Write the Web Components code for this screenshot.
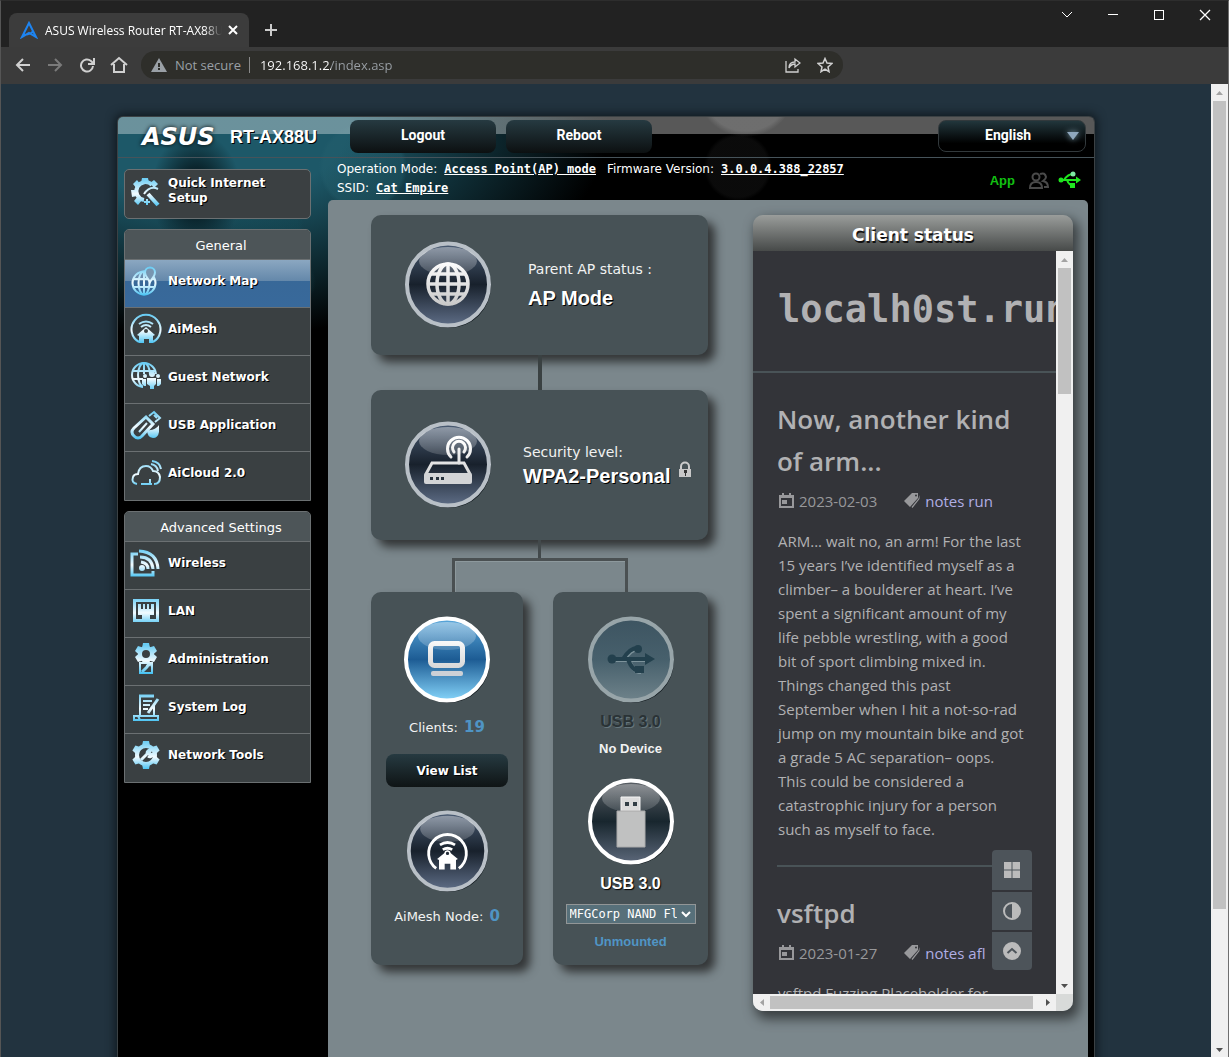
<!DOCTYPE html>
<html lang="en">
<head>
<meta charset="utf-8">
<title>ASUS Wireless Router RT-AX88U</title>
<style>
html, body { margin: 0; height: 100%; overflow: hidden; background: #3b3b3b; }
body { font-family: "DejaVu Sans", sans-serif; font-size: 12px; color: #fff; }
</style>
</head>
<body>
<browser-window>
  <tab-strip slot="tabs">ASUS Wireless Router RT-AX88U</tab-strip>
  <nav-toolbar slot="toolbar"></nav-toolbar>
  <router-page></router-page>
</browser-window>

<script>
const define = (name, css, html) => {
  const template = document.createElement('template');
  template.innerHTML = '<style>*{box-sizing:border-box}' + css + '</style>' + html;
  customElements.define(name, class extends HTMLElement {
    constructor() {
      super();
      this.attachShadow({ mode: 'open' }).append(template.content.cloneNode(true));
    }
  });
};

/* ---------- icons ---------- */
const G = 'stroke="url(#g)" fill="none"';
const F = 'fill="url(#g)"';
const gear = (cx, cy, r, t) => {
  let s = `<circle cx="${cx}" cy="${cy}" r="${r}" fill="none" stroke="url(#g)" stroke-width="${t}"/>`;
  for (let a = 0; a < 360; a += 60) {
    const rad = a * Math.PI / 180, c = Math.cos(rad), n = Math.sin(rad);
    const p = (x, y) => `${(cx + x * c - y * n).toFixed(1)} ${(cy + x * n + y * c).toFixed(1)}`;
    s += `<path ${F} d="M${p(-t, -r)}L${p(1 - t, -r - t - 1)}L${p(t - 1, -r - t - 1)}L${p(t, -r)}z"/>`;
  }
  return s;
};
const icons = {
  wizard: `<path ${G} stroke-width="4" d="M22 9a9 9 0 1 0-8 15"/><path ${F} d="M12 2h6l1 5h-8zM3 8l4-4 4 5-4 4zM1 14h6v6l-5 1zM4 25l4-5 4 4-4 5zM20 7l4-3 4 4-4 4z"/><path ${G} stroke-width="4" d="m18 18 10 11"/><path ${G} d="M14 18c4-6 8-8 14-5M17 23v6M14 26h6"/>`,
  map: `<g ${G}><circle cx="14" cy="18" r="11.500"/><ellipse cx="14" cy="18" rx="5.500" ry="11.500"/><path d="M14 6v24M3 14h22M3 22h22"/></g><path fill="#7896b1" stroke="url(#g)" d="M20 17c-3-5-5-6-5-9.500a5 5 0 0 1 10 0C25 11 23 12 20 17z"/>`,
  mesh: `<g ${G}><path d="M9 29A14.500 14.500 0 1 1 23 29"/><path d="M9 11q7-5 14 0M11 14q5-4 10 0"/></g><path ${F} d="M7 22 16 14l9 8-2 1v7h-4v-4h-5v4H9v-7z"/><circle cx="16" cy="18" r="2" fill="#3a4042"/>`,
  guest: `<g ${G}><circle cx="14" cy="14" r="12"/><ellipse cx="14" cy="14" rx="6" ry="12"/><path d="M14 2v24M2 10h24M2 18h24"/></g><path fill="#3a4042" d="M13 13h18v17H13z"/><g ${F}><circle cx="22" cy="13" r="3"/><circle cx="15" cy="15" r="2"/><circle cx="28" cy="15" r="2"/><path d="M17 17h9v6l-2 2v3h-4v-3l-3-2zM12 18h4v7h-2l-2-2zM27 18h4v5l-2 2h-2z"/></g>`,
  usb: `<g ${G}><path stroke-width="3" d="m4 19 12-11 7 7-11 12q-4 4-8 0t0-8z"/><path d="m9 23 8-9M19 7l5-4 6 6-5 4M24 6l3 3"/></g><path ${F} d="M17 21q8 1 12-5v7q-1 6-6 6-6-1-6-8z"/>`,
  cloud: `<g ${G}><path d="M7 27q-6-1-4-7 1-3 5-3 1-8 8-8 5 0 7 5 6 0 7 6 0 7-6 7M11 27h11M20 22v5M21 7q6 1 7 7M22 4q8 1 9 8"/></g>`,
  wifi: `<g ${G}><path stroke-width="3" d="M8 7H2v21h21v-4"/><path stroke-width="3" d="M9 4q18 1 19 18M10 10q12 0 13 12M11 15q7 1 7 7"/></g><circle cx="12" cy="21" r="3" ${F}/>`,
  lan: `<path ${G} stroke-width="3" d="M4.500 5.500h23v20h-23z"/><path ${F} d="M8 9h3v5h2V9h2v5h2V9h2v5h2V9h3v11h-4v4h-8v-4H8z"/>`,
  admin: gear(16, 11, 6, 4) + `<path fill="#3a4042" d="M9 19h14v12H9z"/><path ${G} d="M10 20h12v10H10z"/><path ${G} stroke-width="3" d="m12 29 5-5q1-3 4-2"/>`,
  log: `<g ${G}><path stroke-width="3" d="M9 5h15"/><path d="M10 5v20h14V14M13 10h9M13 14h7M13 18h5M4 25h24v4H4zM8 25l2 4"/><path stroke-width="3" d="m28 8-10 14"/></g>`,
  tools: gear(16, 16, 9, 4) + `<path ${G} stroke-width="3" d="m11 21 6-6q0-4 4-4l-2 3 1 2 3-1q-2 4-5 2"/>`
};
customElements.define('menu-icon', class extends HTMLElement {
  connectedCallback() {
    this.attachShadow({ mode: 'open' }).innerHTML = `<style>:host{display:block;width:32px;height:32px;flex:none}svg{display:block}</style>
    <svg width="32" height="32" viewBox="0 0 32 32" stroke-width="2" aria-hidden="true"><defs><linearGradient id="g" gradientUnits="userSpaceOnUse" x1="0" y1="2" x2="0" y2="31"><stop offset="0" stop-color="#68ccf4"/><stop offset=".55" stop-color="#f2fbff"/><stop offset="1" stop-color="#3fc0f2"/></linearGradient></defs>${icons[this.getAttribute('name')]}</svg>`;
  }
});

/* ---------- round badges ---------- */
const art = {
  globe: `<g fill="none" stroke="url(#w)" stroke-width="3.500"><circle cx="44" cy="43" r="20"/><ellipse cx="44" cy="43" rx="11" ry="20"/><path d="M44 22v42M24 43h40M27 33h34M27 53h34"/></g>`,
  router: `<g fill="none" stroke="url(#w)" stroke-width="3" stroke-linecap="round"><path d="M55 42V28M50 31a6.500 6.500 0 1 1 10 0M47 36a11.500 11.500 0 1 1 16 0"/><path d="M22 53l6-11h32l6 11"/></g><rect x="20" y="52" width="48" height="11" rx="2" fill="#d3d4d6"/><path fill="#26313c" d="M26 56h3v3h-3zM32 56h3v3h-3zM37 56h3v3h-3z"/>`,
  client: `<rect x="27.500" y="27.500" width="32" height="22" rx="4" fill="none" stroke="url(#w)" stroke-width="5"/><rect x="28" y="55" width="32" height="5" rx="2" fill="#ccd0d6"/>`,
  node: `<g fill="none" stroke="#fff" stroke-width="3"><path d="M32 62a20 20 0 1 1 24 0"/><path d="M36 37q8-5 16 0M39 42q5-3 10 0"/></g><path fill="#fff" d="M33 52l11-9 11 9-2 1v10h-6v-6h-6v6h-6V53z"/><circle cx="44" cy="46" r="2.500" fill="#222c38" stroke="#fff" stroke-width="1.500"/>`,
  usb: `<g fill="none" stroke="#7d939b" stroke-width="4"><path d="M27 44h34M37 44q7-11 14-11M42 44q4 12 12 12"/></g><g fill="none" stroke="#23404d" stroke-width="4"><path d="M26 43h34M36 43q7-11 14-11M41 43q4 12 12 12"/></g><g fill="#23404d"><circle cx="25" cy="43" r="4.500"/><circle cx="51" cy="33" r="4"/><path d="m58 37 10 6-10 6zM48 50h9v7h-9z"/></g>`,
  stick: `<path fill="#dcdcdc" stroke="#f4f4f4" d="M34 19h19v14H34z"/><path fill="#c0c1c1" stroke="#aaa" d="M30 33h28v36H30z"/><path fill="#333f46" d="M38 24h4v4h-4zM46 24h4v4h-4z"/>`
};
const tone = {
  dark: ['#4b5d75', '#18212c', '#5e6d86', '#b9c0c7', .3],
  blue: ['#5ba9dc', '#1d5c94', '#85d4fa', '#ffffff', .3],
  dull: ['#3d5461', '#47606c', '#6e828a', '#98a5a9', 0],
  steel: ['#5c6167', '#18262e', '#5b6779', '#ffffff', .25]
};
customElements.define('status-badge', class extends HTMLElement {
  connectedCallback() {
    const t = tone[this.getAttribute('tone')];
    this.attachShadow({ mode: 'open' }).innerHTML = `<style>:host{display:block;width:88px;height:88px;flex:none}svg{display:block;width:100%;height:100%}</style>
    <svg viewBox="0 0 88 88" aria-hidden="true"><defs>
    <linearGradient id="b" x1="0" y1="0" x2="0" y2="1"><stop offset="0" stop-color="${t[0]}"/><stop offset=".5" stop-color="${t[1]}"/><stop offset="1" stop-color="${t[2]}"/></linearGradient>
    <linearGradient id="h" x1="0" y1="0" x2="0" y2="1"><stop offset="0" stop-color="#fff" stop-opacity="${t[4] * 1.3}"/><stop offset="1" stop-color="#fff" stop-opacity="${t[4] / 2}"/></linearGradient>
    <linearGradient id="w" gradientUnits="userSpaceOnUse" x1="0" y1="20" x2="0" y2="66"><stop offset="0" stop-color="#fff"/><stop offset="1" stop-color="#c6c6c6"/></linearGradient></defs>
    <circle cx="45" cy="45" r="42" fill="#10181d"/>
    <circle cx="44" cy="43.500" r="41" fill="url(#b)" stroke="${t[3]}" stroke-width="4"/>
    <ellipse cx="44" cy="20" rx="29" ry="14" fill="url(#h)"/>${art[this.getAttribute('name')]}</svg>`;
  }
});

/* ---------- browser chrome ---------- */
define('browser-window', `
:host{display:flex;flex-direction:column;height:100vh;border:1px solid #6f6f6f;border-top-color:#2d2d2d;border-left-color:#555;background:#22333f}
.view{flex:1;min-height:0;display:flex}
.page{flex:1;min-width:0;overflow:hidden}`,
`<slot name="tabs"></slot><slot name="toolbar"></slot>
<div class="view"><div class="page"><slot></slot></div><scroll-bar style="--thumb:808px"></scroll-bar></div>`);

define('tab-strip', `
:host{display:flex;height:46px;background:#222;font-family:"Open Sans",sans-serif;color:#fff}
.tab{margin:12px 0 0 8px;width:240px;height:34px;background:#3c3c3c;border-radius:8px 8px 0 0;display:flex;align-items:center;padding:0 7px 0 11px}
.title{flex:1;margin:0 2px 0 7px;font-size:12px;overflow:hidden;white-space:nowrap;-webkit-mask-image:linear-gradient(90deg,#000 90%,transparent)}
button{border:0;background:none;padding:0;display:flex;align-items:center;justify-content:center;color:#fff}
.close{width:18px;height:18px}
.add{width:28px;height:28px;margin:15px 0 0 8px;color:#ccc}
.win{margin-left:auto;display:flex}
.win button{width:46px;height:28px}
path,rect{fill:none;stroke:currentColor}`,
`<div class="tab"><svg width="18" height="18" viewBox="0 0 18 18"><path style="stroke:#1e84f0;stroke-width:2" d="M9 2 2 16l7-4 7 4L9 2zM4 14q8-1 9-4"/></svg><div class="title"><slot></slot></div>
<button class="close" aria-label="Close tab"><svg width="10" height="10"><path stroke-width="2" d="m1 1 8 8m0-8-8 8"/></svg></button></div>
<button class="add" aria-label="New tab"><svg width="14" height="14"><path stroke-width="2" d="M7 1v12M1 7h12"/></svg></button>
<div class="win"><button aria-label="Search tabs"><svg width="12" height="8"><path d="m1 1 5 5 5-5"/></svg></button>
<button aria-label="Minimize"><svg width="10" height="2"><path d="M0 .5h10"/></svg></button>
<button aria-label="Maximize"><svg width="12" height="12"><rect x="1.500" y="1.500" width="9" height="9"/></svg></button>
<button aria-label="Close"><svg width="12" height="12"><path stroke-width="1.300" d="m1 1 10 10M11 1 1 11"/></svg></button></div>`);

define('nav-toolbar', `
:host{display:flex;align-items:center;height:37px;padding:0 6px 2px;box-sizing:border-box;background:#3b3b3b;font-family:"Open Sans",sans-serif;font-size:13px}
button{border:0;background:none;padding:0;width:32px;height:32px;display:flex;align-items:center;justify-content:center;color:#d0d0d0;flex:none}
svg{display:block;flex:none}
path{fill:none;stroke:currentColor;stroke-width:2}
.dim{color:#7a7a7a}
.box{display:flex;align-items:center;margin-left:6px;width:702px;height:28px;border-radius:14px;background:#2e2e2a;padding:0 2px 0 10px;color:#9aa0a6}
.sec{margin-left:8px;padding-right:8px;border-right:1px solid #8a8a8a;line-height:16px;white-space:nowrap}
input{flex:1;min-width:0;border:0;outline:0;margin-left:10px;padding:0;height:20px;font:inherit;color:transparent;background:linear-gradient(90deg,#fff 71px,#9aa0a6 71px);-webkit-background-clip:text;background-clip:text}`,
`<button aria-label="Back"><svg width="16" height="16"><path d="M15 8H2M8 2 2 8l6 6"/></svg></button>
<button class="dim" aria-label="Forward"><svg width="16" height="16"><path d="M1 8h13M8 2l6 6-6 6"/></svg></button>
<button aria-label="Reload"><svg width="16" height="16"><path d="M14 9a6 6 0 1 1-2-5l2 2M15 1v6H9"/></svg></button>
<button aria-label="Home"><svg width="18" height="18"><path d="M1 9l8-7 8 7M4 8v8h10V8"/></svg></button>
<div class="box"><svg width="16" height="14"><path style="fill:#9aa0a6;stroke:none" d="M8 0l8 14H0z"/><path style="stroke:#2e2e2a" d="M8 5v4M8 10v2"/></svg><span class="sec">Not secure</span>
<input aria-label="Address" value="192.168.1.2/index.asp">
<button aria-label="Share"><svg width="16" height="16"><path style="stroke-width:1.300" d="M1 4v11h12v-3M4 11q0-6 6-6V2l5 4-5 4V7q-4 0-6 4"/></svg></button>
<button aria-label="Bookmark"><svg width="16" height="16"><path style="stroke-width:1.500" d="m8 1.500 2 4.500 5 .5-4 3.500 1 4.700-4-2.500-4 2.500 1-4.700L1 6.500 6 6z"/></svg></button></div>`);

define('scroll-bar', `
:host{display:flex;flex-direction:column;align-items:center;width:17px;flex:none;background:#f0f0f0}
svg{display:block;width:17px;height:17px;flex:none}
.track{flex:1;width:13px;min-height:0}
.thumb{background:#c1c1c1;height:var(--thumb)}
:host([horizontal]){flex-direction:row;width:auto;height:17px}
:host([horizontal]) .track{width:auto;height:13px}
:host([horizontal]) .thumb{width:var(--thumb);height:13px}
:host([horizontal]) svg{transform:rotate(-90deg)}`,
`<svg><path fill="#a3a3a3" d="M5 11h7L8.500 7z"/></svg><div class="track"><div class="thumb"></div></div><svg><path fill="#505050" d="M5 7h7l-3.500 4z"/></svg>`);

/* ---------- router page ---------- */
define('router-page', `
:host{display:block;height:100%;padding:32px 20px 0}
.shell{display:flex;flex-direction:column;height:100%;max-width:978px;margin:0 auto;border:1px solid #3b4144;border-bottom:0;border-radius:6px 6px 0 0;overflow:hidden;box-shadow:0 0 10px 2px #10191f;
background:
 radial-gradient(ellipse 45px 60px at 78px 75px,#06191fd0 40%,transparent 100%),
 radial-gradient(circle at 245px 50px,#25606e60 40px,transparent 44px),
 radial-gradient(circle at 150px 110px,#14495560 30px,transparent 36px),
 radial-gradient(circle at 170px 165px,#1b56611f 24px,transparent 28px),
 radial-gradient(circle at 628px -30px,#5a5a5a60 44px,transparent 50px),
 radial-gradient(circle at 620px 50px,#1c1c1c60 30px,transparent 34px),
 radial-gradient(ellipse 400px 210px at 90px 10px,#1d5868 0 35%,transparent),#000}
.row{display:flex;flex:1;min-height:0}
side-menu{margin:11px 0 0 6px}
main{flex:1;min-width:0;margin:0 6px 0 17px;display:flex;flex-direction:column}
.board{flex:1;min-height:0;display:flex;justify-content:space-between;align-items:flex-start;padding:15px 15px 0 43px;background:#7b878c;border-radius:5px 5px 0 0}`,
`<div class="shell"><page-header></page-header><div class="row"><side-menu></side-menu>
<main><system-status></system-status><div class="board"><network-map></network-map><client-status>Client status</client-status></div></main></div></div>`);

define('page-header', `
:host{display:flex;align-items:flex-start;box-sizing:border-box;height:41px;padding:3px 8px 0 24px;border-bottom:1px solid #46535a;background:linear-gradient(#ffffff58 0 17px,transparent 17px);font-family:Roboto,sans-serif;font-weight:700}
.logo{font:italic 700 24px/35px "DejaVu Sans",sans-serif;width:88px;text-shadow:0 0 4px #000}
.model{font:700 18px/35px "Liberation Sans",sans-serif;width:120px;text-shadow:1px 1px #000;white-space:nowrap}
button{width:146px;height:33px;margin-right:10px;padding:0 0 3px;border:0;border-radius:8px;background:linear-gradient(#263a41,#0c1011);color:#fff;font:700 14px/20px Roboto,sans-serif}
label{margin-left:auto;display:grid;width:148px;height:32px}
select{grid-area:1/1;appearance:none;border:1px solid #32393c;border-radius:8px;background:linear-gradient(#22363c,#000 75%);color:#fff;font:700 14px/20px Roboto,sans-serif;padding:0 0 2px 46px}
svg{grid-area:1/1;align-self:center;justify-self:end;margin-right:7px;pointer-events:none;filter:drop-shadow(0 0 3px #8ab)}`,
`<span class="logo">ASUS</span><span class="model">RT-AX88U</span><button>Logout</button><button>Reboot</button>
<label><select aria-label="Language"><option>English</option></select><svg width="12" height="8"><path fill="#8fa7bd" d="M0 0h12L6 8z"/></svg></label>`);

define('system-status', `
:host{display:flex;justify-content:space-between;box-sizing:border-box;height:42px;padding:2px 6px 0 9px;font-size:12px;line-height:19px}
.line{display:flex;gap:7px;white-space:nowrap}
a{color:#fff;font-family:"DejaVu Sans Mono",monospace;font-weight:700}
.fw{margin-left:4px}
.tools{display:flex;align-items:center;gap:9px}
.app{color:#12c012;font:700 13px/19px "Liberation Sans",sans-serif;text-decoration:none;margin-right:5px}`,
`<div><div class="line"><span>Operation Mode:</span><a href="#mode">Access Point(AP) mode</a><span class="fw">Firmware Version:</span><a href="#fw">3.0.0.4.388_22857</a></div>
<div class="line"><span>SSID:</span><a href="#ssid">Cat Empire</a></div></div>
<div class="tools"><a class="app" href="#app">App</a>
<svg width="20" height="17" fill="none" stroke="#4a4a4a" stroke-width="2"><circle cx="7" cy="5" r="3.500"/><path d="M1 16q0-6 6-6t6 6zM11 2q5-2 6 3 0 2-3 4 5 1 5 6h-4"/></svg>
<svg width="24" height="18"><g fill="none" stroke="#1fe51f" stroke-width="2"><path d="M3 9h16M6 9q4-6 9-6M9 9q2 6 8 6"/></g><g fill="#1fe51f"><circle cx="3" cy="9" r="2.500"/><circle cx="15" cy="3" r="2.500" fill="#7fe9a4"/><path d="M18 5.500 23 9l-5 3.500zM12 12h5v5h-5z"/></g></svg></div>`);

define('side-menu', `
:host{display:block;width:187px;flex:none}
a{color:#fff;text-decoration:none;font-weight:700;line-height:15px;text-shadow:1px 1px #000}
.quick{display:flex;align-items:flex-start;gap:6px;height:50px;padding:6px 30px 0 5px;border:1px solid #6b7072;border-radius:5px;background:#3b4042}`,
`<a class="quick" href="#qis"><menu-icon name="wizard"></menu-icon><span>Quick Internet Setup</span></a>
<menu-group><span slot="title">General</span>
<menu-item active icon="map">Network Map</menu-item><menu-item icon="mesh">AiMesh</menu-item><menu-item icon="guest">Guest Network</menu-item><menu-item icon="usb">USB Application</menu-item><menu-item icon="cloud">AiCloud 2.0</menu-item></menu-group>
<menu-group><span slot="title">Advanced Settings</span>
<menu-item icon="wifi">Wireless</menu-item><menu-item icon="lan">LAN</menu-item><menu-item icon="admin">Administration</menu-item><menu-item icon="log">System Log</menu-item><menu-item icon="tools">Network Tools</menu-item></menu-group>`);

define('menu-group', `
:host{display:block;margin-top:10px;padding-bottom:1px;border:1px solid #6b7072;border-radius:5px 5px 0 0;background:#3a4042}
.title{height:29px;padding-left:7px;line-height:31px;text-align:center;font-size:13px;background:#4d5558;border-radius:4px 4px 0 0}`,
`<div class="title"><slot name="title"></slot></div><slot></slot>`);

customElements.define('menu-item', class extends HTMLElement {
  connectedCallback() {
    this.attachShadow({ mode: 'open' }).innerHTML = `<style>
    :host{display:block;border-top:1px solid #6b7072}
    a{display:flex;align-items:center;gap:6px;height:47px;padding:0 0 5px 5px;color:#fff;text-decoration:none;font-weight:700;font-size:12px;line-height:15px;text-shadow:1px 1px #000;box-sizing:border-box}
    :host([active]) a{background:linear-gradient(#8ba7c1,#6488aa 21px,#386898 21px,#38699b)}</style>
    <a href="#${this.getAttribute('icon')}"><menu-icon name="${this.getAttribute('icon')}"></menu-icon><slot></slot></a>`;
  }
});

/* ---------- network map ---------- */
define('map-card', `
:host{display:block;background:#475256;border-radius:10px;box-shadow:7px 7px 10px #333637}`, `<slot></slot>`);

define('network-map', `
:host{display:block;width:337px;flex:none;color:#f2f2f2}
.wide{display:flex;align-items:center;padding:0 0 0 33px}
.ap{height:140px}.sec{height:150px}
.info{margin-left:36px;padding-bottom:4px;line-height:24px;font-size:14px;white-space:nowrap}
.sec .info{margin-left:31px;padding-bottom:2px}
strong{display:block;font:700 20px/24px "Liberation Sans",sans-serif;color:#fff;text-shadow:1px 1px #000}
.ap strong{margin-top:5px}
.net{display:flex;gap:8px}
.net svg{margin-top:-3px}
.stem{width:4px;height:35px;margin:0 auto;background:#3a4142;position:relative}
.stem.short{width:3px;height:18px;background:#42494b}
.fork{height:34px;margin:0 80px 0 81px;border:solid #4a5052;border-width:3px 3px 0;box-shadow:inset 1px 1px #8d999d}
.pair{display:flex;gap:30px;position:relative}
.pair map-card{height:373px;display:flex;flex-direction:column;align-items:center}
.clients{width:152px;padding-top:24px}
.usb{width:155px;padding-top:24px}
.count{font-size:13px;line-height:20px;margin-top:13px}
.count b{color:#4f94c4;font-size:15px;margin-left:2px}
.view{width:122px;height:33px;margin:16px 0 23px;border:0;border-radius:8px;background:linear-gradient(#263a41,#0f1415);color:#fff;font:700 12px/16px "DejaVu Sans",sans-serif;text-shadow:1px 1px #000}
.node{width:83px;height:83px}
.lab{font:700 16px/20px "Liberation Sans",sans-serif;margin-top:8px;color:#fff;text-shadow:1px 1px 1px #000}
.lab.off{color:#2a3336;text-shadow:1px 1px #66767c}
.small{font:700 13px/17px "Liberation Sans",sans-serif;margin:8px 0 21px}
.small.un{color:#5095c5;margin:9px 0 0}
.dev{display:grid;width:130px;height:20px;margin-top:10px}
select{grid-area:1/1;min-width:0;appearance:none;border:1px solid #929697;border-radius:0;background:#57707a;color:#fff;font:12px/16px "DejaVu Sans Mono",monospace;padding:0 18px 1px 3px;overflow:hidden;text-overflow:clip}
.dev svg{grid-area:1/1;align-self:center;justify-self:end;margin-right:5px;pointer-events:none}`,
`<map-card class="ap"><div class="wide ap"><status-badge tone="dark" name="globe"></status-badge><div class="info">Parent AP status :<strong>AP Mode</strong></div></div></map-card>
<div class="stem"></div>
<map-card><div class="wide sec"><status-badge tone="dark" name="router"></status-badge><div class="info">Security level:<div class="net"><strong>WPA2-Personal</strong><svg width="14" height="17"><path fill="none" stroke="#ccc" stroke-width="2" d="M3 9V5.500a4 4 0 0 1 8 0V9"/><path fill="#c8c8c8" d="M1 8h12v8H1z"/><path fill="#333" d="M6 9h3v3H8v3H7v-3H6z"/></svg></div></div></div></map-card>
<div class="stem short"></div><div class="fork"></div>
<div class="pair"><map-card class="clients"><status-badge tone="blue" name="client"></status-badge><div class="count">Clients: <b>19</b></div><button class="view">View List</button><status-badge class="node" tone="dark" name="node"></status-badge><div class="count">AiMesh Node: <b>0</b></div></map-card>
<map-card class="usb"><status-badge tone="dull" name="usb"></status-badge><div class="lab off">USB 3.0</div><div class="small">No Device</div><status-badge tone="steel" name="stick"></status-badge><div class="lab">USB 3.0</div>
<label class="dev"><select aria-label="USB device"><option>MFGCorp NAND Flash</option></select><svg width="10" height="7"><path fill="none" stroke="#fff" stroke-width="2" d="m1 1 4 4 4-4"/></svg></label><div class="small un">Unmounted</div></map-card></div>`);

/* ---------- client status ---------- */
define('client-status', `
:host{display:block;width:320px;flex:none;border-radius:10px;box-shadow:4px 6px 12px 2px #3a3f41;overflow:hidden}
header{height:36px;background:linear-gradient(#9a9d9b,#474a49);font:700 17px/40px "DejaVu Sans",sans-serif;text-align:center;text-shadow:1px 2px #111}
.mid{display:flex;height:743px}
.bottom{display:flex;background:#d8dad9}
.bottom scroll-bar{flex:1}`,
`<header><slot></slot></header><div class="mid"><blog-frame></blog-frame><scroll-bar style="--thumb:126px"></scroll-bar></div>
<div class="bottom"><scroll-bar horizontal style="--thumb:263px"></scroll-bar><svg width="17" height="17"></svg></div>`);

define('blog-frame', `
:host{display:grid;flex:1;min-width:0;height:100%;overflow:hidden;background:#333439;color:#b1b1b3;font:15px/24px "Open Sans",sans-serif}
.doc{grid-area:1/1;min-width:0;overflow:hidden}
h1{margin:0;height:122px;padding:30px 0 0 25px;border-bottom:2px solid #495357;font:700 37px/58px "DejaVu Sans Mono",monospace;white-space:nowrap}
.tools{grid-area:1/1;align-self:end;justify-self:end;display:flex;flex-direction:column;gap:2px;margin:0 24px 24px 0;position:relative}
button{width:40px;height:38px;border:0;padding:0;background:#4d545a;display:flex;align-items:center;justify-content:center}
button:first-child{height:40px;border-radius:4px 4px 0 0}
button:last-child{border-radius:0 0 4px 4px}`,
`<div class="doc"><h1>localh0st.run</h1>
<blog-post><span slot="title">Now, another kind<br>of arm...</span><span slot="date">2023-02-03</span><a slot="tags" href="#run">notes run</a>
ARM... wait no, an arm! For the last<br>15 years I’ve identified myself as a<br>climber– a boulderer at heart. I’ve<br>spent a significant amount of my<br>life pebble wrestling, with a good<br>bit of sport climbing mixed in.<br>Things changed this past<br>September when I hit a not-so-rad<br>jump on my mountain bike and got<br>a grade 5 AC separation– oops.<br>This could be considered a<br>catastrophic injury for a person<br>such as myself to face.</blog-post>
<blog-post><span slot="title">vsftpd</span><span slot="date">2023-01-27</span><a slot="tags" href="#afl">notes afl</a>vsftpd Fuzzing Placeholder for</blog-post></div>
<div class="tools"><button aria-label="Menu"><svg width="18" height="18" fill="#bbb"><path d="M1 1h7.500v7.500H1zM9.500 1H17v7.500H9.500zM1 9.500h7.500V17H1zM9.500 9.500H17V17H9.500z"/></svg></button>
<button aria-label="Contrast"><svg width="20" height="20"><circle cx="10" cy="10" r="8" fill="none" stroke="#bbb" stroke-width="2"/><path fill="#bbb" d="M10 2a8 8 0 0 1 0 16z"/></svg></button>
<button aria-label="Back to top"><svg width="20" height="20"><circle cx="10" cy="10" r="9" fill="#bbb"/><path fill="none" stroke="#4d545a" stroke-width="2" d="m5.500 12 4.500-4 4.500 4"/></svg></button></div>`);

define('blog-post', `
:host{display:block;margin:0 24px;padding:25px 0 24px;border-bottom:2px solid #495357;white-space:nowrap}
h2{margin:0;font:600 26px/42px "Open Sans",sans-serif}
.meta{display:flex;align-items:center;height:36px;padding-top:1px;color:#98989b}
.meta svg{margin:0 4px 0 1px}
.meta svg.tag{margin-left:27px}
::slotted(a){color:#b0aee4;text-decoration:none}
.text{margin-top:11px;padding-left:1px}`,
`<h2><slot name="title"></slot></h2><div class="meta"><svg width="17" height="16"><path fill="none" stroke="#98989b" stroke-width="2" d="M2 3h13v11H2zM2 4h13M5 0v3M12 0v3"/><path fill="#98989b" d="M4 7h5v4H4z"/></svg><slot name="date"></slot>
<svg class="tag" width="17" height="17"><path fill="#98989b" d="M8 1h6v5l-8 9-6-6zM15.500 3v4l-7 9-1-1 7-8.500z"/><circle cx="12" cy="3.500" r="1" fill="#333439"/></svg><slot name="tags"></slot></div><div class="text"><slot></slot></div>`);
</script>
</body>
</html>
